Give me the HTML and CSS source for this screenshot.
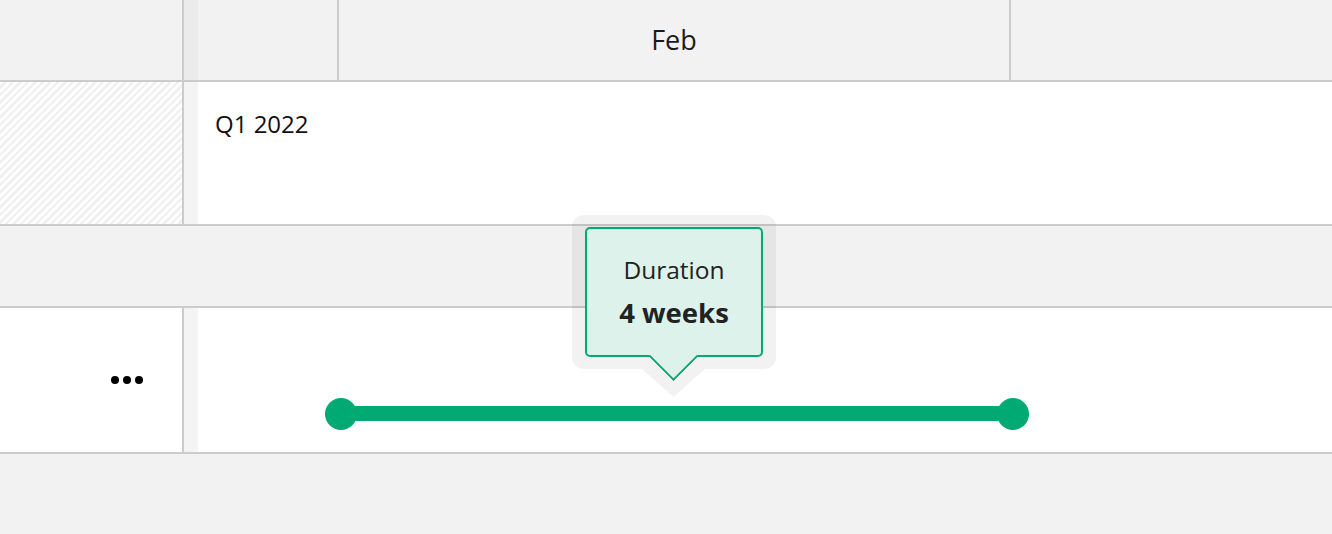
FILE: index.html
```html
<!DOCTYPE html>
<html>
<head>
<meta charset="utf-8">
<link rel="stylesheet" href="styles.css">
</head>
<body>
<div class="gantt">
  <div class="row header">
    <div class="side"></div>
    <div class="timeline">
      <div class="strip"></div>
      <div class="hcell first"></div>
      <div class="hcell month">Feb</div>
      <div class="hcell last"></div>
    </div>
  </div>
  <div class="row group">
    <div class="side hatched"></div>
    <div class="timeline">
      <div class="strip"></div>
      <div class="group-label">Q1 2022</div>
    </div>
  </div>
  <div class="row band"></div>
  <div class="row task">
    <div class="side"><span class="dots" aria-label="more"><i></i><i></i><i></i></span></div>
    <div class="timeline">
      <div class="strip"></div>
      <div class="bar" style="left:157px; width:672px;">
        <span class="knob start"></span>
        <span class="knob end"></span>
      </div>
    </div>
  </div>
  <div class="row footer"></div>

  <div class="tooltip">
    <div class="halo"></div>
    <div class="halo-arrow"></div>
    <div class="box">
      <div class="t-label">Duration</div>
      <div class="t-value">4 weeks</div>
    </div>
    <div class="arrow"></div>
  </div>
</div>
</body>
</html>
```

FILE: styles.css
```css
* { box-sizing: border-box; }
html, body { margin: 0; padding: 0; }
body {
  width: 1332px;
  height: 534px;
  overflow: hidden;
  font-family: "Open Sans", "Noto Sans", sans-serif;
  color: #1a1a1a;
  background: #f2f2f2;
}
.gantt {
  position: relative;
  display: flex;
  flex-direction: column;
  width: 1332px;
  height: 534px;
}
.row {
  display: flex;
  border-bottom: 2px solid #cccccc;
}
.side {
  width: 184px;
  flex: none;
  border-right: 2px solid #cccccc;
}
.timeline {
  flex: 1;
  display: flex;
  position: relative;
}
.strip {
  width: 14px;
  flex: none;
}

/* header */
.header { height: 82px; background: #f2f2f2; }
.header .strip { background: #ebebeb; }
.hcell { height: 100%; }
.hcell.first { width: 141px; border-right: 2px solid #cccccc; }
.hcell.month {
  width: 672px;
  border-right: 2px solid #cccccc;
  display: flex;
  align-items: center;
  justify-content: center;
  font-size: 27px;
  padding-bottom: 2px;
  color: #1a1a1a;
}
.hcell.last { flex: 1; }

/* group row */
.group { height: 144px; background: #ffffff; }
.hatched {
  background: repeating-linear-gradient(135deg, #ffffff 0 2.7px, #f0f0f0 2.7px 5.3px);
}
.group .strip { background: #f4f4f4; }
.group-label {
  padding: 25px 0 0 17px;
  font-size: 24px;
  color: #111;
}

/* band */
.band { height: 82px; background: #f2f2f2; }

/* task row */
.task { height: 146px; background: #ffffff; }
.task .side {
  display: flex;
  justify-content: flex-end;
  align-items: center;
  padding-right: 39px;
}
.dots {
  display: flex;
  gap: 4px;
  margin-top: 0;
}
.dots i {
  display: block;
  width: 8px;
  height: 8px;
  border-radius: 50%;
  background: #000;
}
.task .strip { background: #f4f4f4; }
.bar {
  position: absolute;
  top: 98px;
  height: 15px;
  background: #00aa72;
}
.knob {
  position: absolute;
  top: 50%;
  width: 32px;
  height: 32px;
  margin-top: -16px;
  border-radius: 50%;
  background: #00aa72;
}
.knob.start { left: -16px; }
.knob.end { right: -16px; }

.footer { flex: 1; border-bottom: none; background: #f2f2f2; }

/* tooltip */
.tooltip {
  position: absolute;
  left: 572px;
  top: 215px;
  width: 204px;
  height: 182px;
}
.halo {
  position: absolute;
  left: 0; top: 0;
  width: 204px;
  height: 154px;
  border-radius: 12px;
  background: rgba(0, 0, 0, 0.05);
}
.halo-arrow {
  position: absolute;
  left: 70px;
  top: 154px;
  width: 63px;
  height: 28px;
  background: rgba(0, 0, 0, 0.05);
  clip-path: polygon(0 0, 100% 0, 50% 100%);
}
.box {
  position: absolute;
  left: 13px;
  top: 12px;
  width: 178px;
  height: 130px;
  border: 2px solid #00aa72;
  border-radius: 5px;
  background: #ddf2ea;
  display: flex;
  flex-direction: column;
  align-items: center;
  padding-top: 25px;
}
.t-label {
  font-size: 24.5px;
  line-height: 32px;
  color: #222;
}
.t-value {
  font-size: 27.5px;
  font-weight: 700;
  line-height: 38px;
  margin-top: 8px;
  color: #222;
}
.arrow {
  position: absolute;
  left: 84px;
  top: 124px;
  width: 35px;
  height: 35px;
  background: #ddf2ea;
  border-right: 2px solid #00aa72;
  border-bottom: 2px solid #00aa72;
  transform: rotate(45deg);
  clip-path: polygon(100% -8%, 100% 100%, -8% 100%);
}
```
